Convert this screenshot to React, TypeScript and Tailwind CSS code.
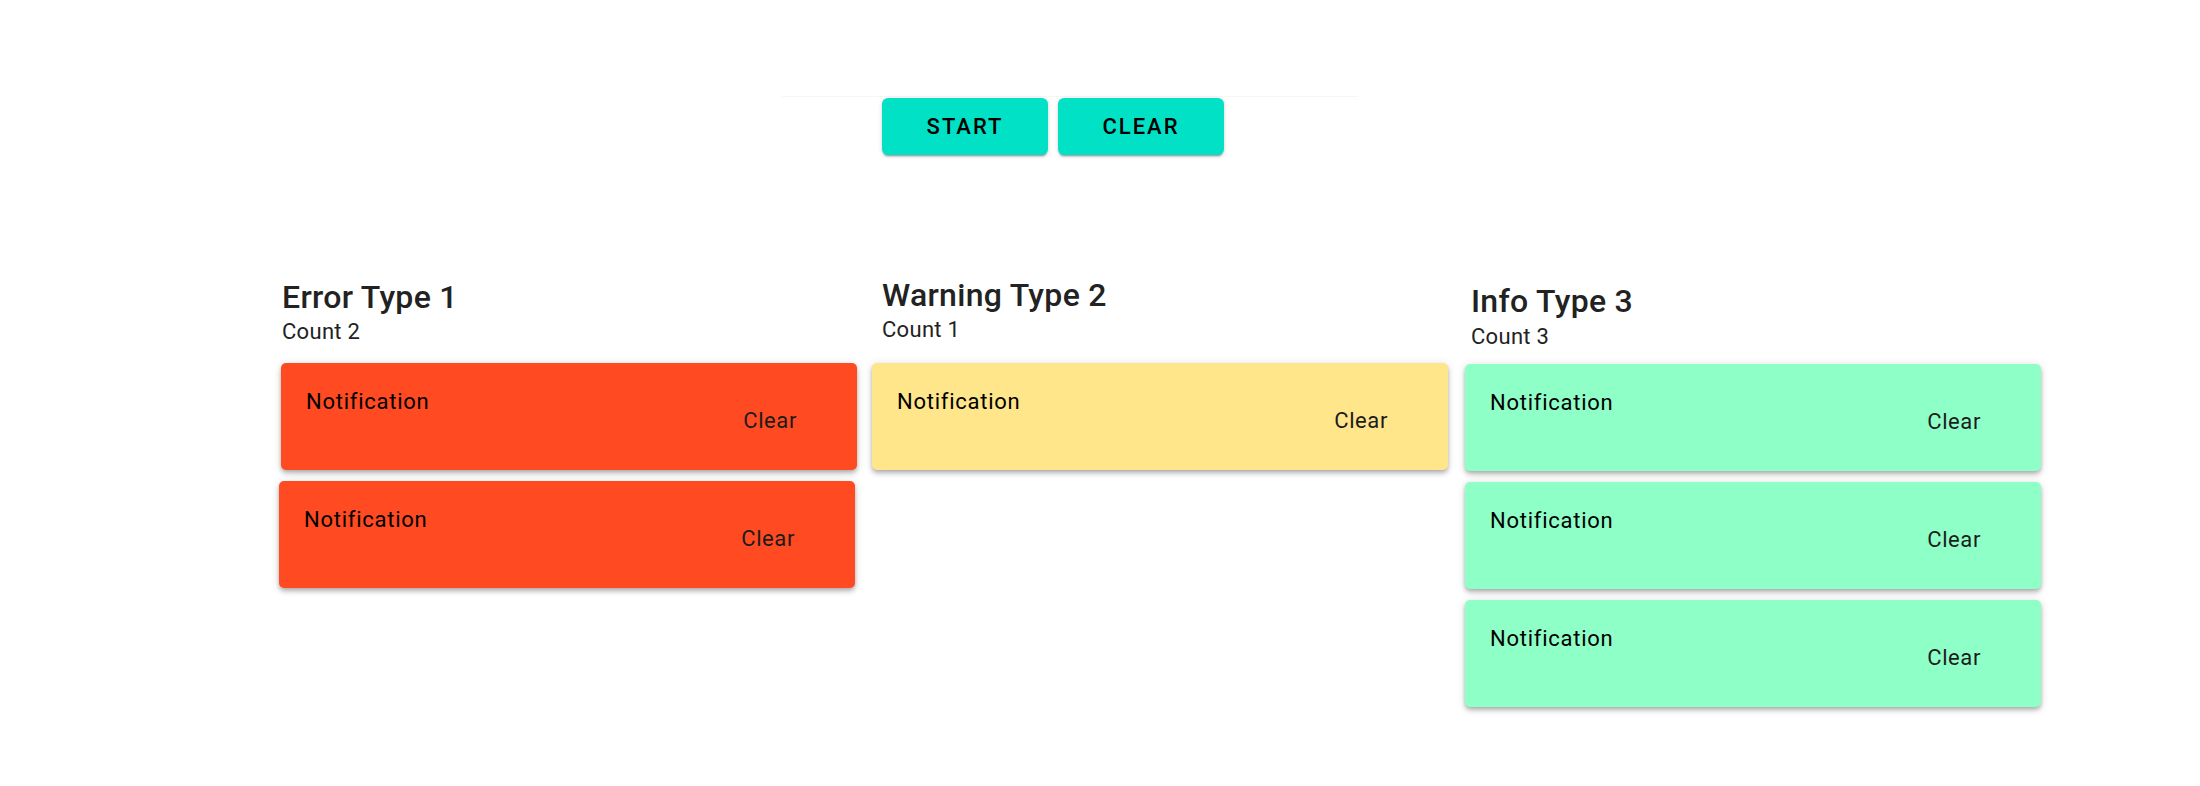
import React from "react";

const cardShadow =
  "shadow-[0_2px_4px_-1px_rgba(0,0,0,0.2),0_4px_5px_0_rgba(0,0,0,0.14),0_1px_10px_0_rgba(0,0,0,0.12)]";

function Card({ color, extra = "" }: { color: string; extra?: string }) {
  return (
    <div
      className={`w-[576px] h-[107px] rounded-[5px] flex items-start justify-between pl-[25px] pr-[60px] ${cardShadow} ${color} ${extra}`}
    >
      <span className="pt-[26px] text-[22px] leading-[26px] tracking-[0.75px] text-black">Notification</span>
      <span className="pt-[45px] text-[22px] leading-[26px] tracking-[0.6px] text-[#1c1c1c]">Clear</span>
    </div>
  );
}

export default function App() {
  return (
    <div className="w-[2200px] h-[786px] bg-white overflow-hidden font-['Roboto','Liberation_Sans',sans-serif]">
      <div className="pt-[96px]">
        <div className="ml-[782px] w-[576px] h-px bg-[#f6f6f6]" />
        <div className="mt-[1px] ml-[882px] flex gap-[10px]">
          <button className="w-[166px] h-[57px] rounded-[6px] bg-[#00e1c6] text-black text-[22px] font-medium tracking-[2px] shadow-[0_3px_1px_-2px_rgba(0,0,0,0.2),0_2px_2px_0_rgba(0,0,0,0.14),0_1px_5px_0_rgba(0,0,0,0.12)]">
            START
          </button>
          <button className="w-[166px] h-[57px] rounded-[6px] bg-[#00e1c6] text-black text-[22px] font-medium tracking-[2px] shadow-[0_3px_1px_-2px_rgba(0,0,0,0.2),0_2px_2px_0_rgba(0,0,0,0.14),0_1px_5px_0_rgba(0,0,0,0.12)]">
            CLEAR
          </button>
        </div>
      </div>

      <div className="mt-[120px] pl-[281px] flex items-start gap-[15px]">
        {/* Error */}
        <div className="w-[576px] pt-[2px] flex flex-col">
          <div className="pl-[1px]">
            <div className="text-[32px] leading-[40px] font-medium tracking-[0.3px] text-[#222]">Error Type 1</div>
            <div className="mt-[2px] text-[22px] leading-[26px] tracking-[0.3px] text-[#222]">Count 2</div>
          </div>
          <div className="mt-[18px] flex flex-col gap-[11px]">
            <Card color="bg-[#ff4a22]" />
            <Card color="bg-[#ff4a22]" extra="-translate-x-[2px]" />
          </div>
        </div>

        {/* Warning */}
        <div className="w-[576px] flex flex-col">
          <div className="pl-[10px]">
            <div className="text-[32px] leading-[40px] font-medium tracking-[0.3px] text-[#222]">Warning Type 2</div>
            <div className="mt-[2px] text-[22px] leading-[26px] tracking-[0.3px] text-[#222]">Count 1</div>
          </div>
          <div className="mt-[20px] flex flex-col gap-[11px]">
            <Card color="bg-[#ffe68a]" />
          </div>
        </div>

        {/* Info */}
        <div className="w-[576px] ml-[2px] pt-[6px] flex flex-col">
          <div className="pl-[6px]">
            <div className="text-[32px] leading-[40px] font-medium tracking-[0.3px] text-[#222]">Info Type 3</div>
            <div className="mt-[3px] text-[22px] leading-[26px] tracking-[0.3px] text-[#222]">Count 3</div>
          </div>
          <div className="mt-[14px] flex flex-col gap-[11px]">
            <Card color="bg-[#8fffc8]" />
            <Card color="bg-[#8fffc8]" />
            <Card color="bg-[#8fffc8]" />
          </div>
        </div>
      </div>
    </div>
  );
}
